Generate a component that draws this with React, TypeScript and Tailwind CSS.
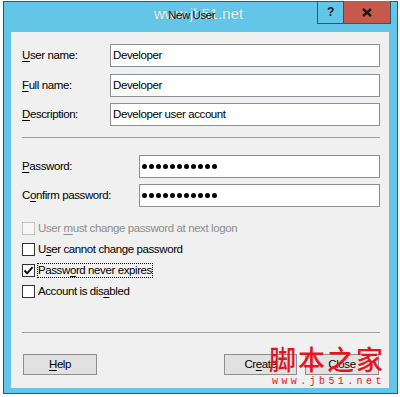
import React from 'react';

type AccProps = { text: string; at: number };

// label text with one underlined access key
function Acc({ text, at }: AccProps) {
  return (
    <span>
      {text.slice(0, at)}
      <span className="underline underline-offset-[2px]">{text[at]}</span>
      {text.slice(at + 1)}
    </span>
  );
}

function TextBox({ value, className }: { value: string; className: string }) {
  return (
    <div className={`h-[23px] border border-[#8c8f94] bg-white pl-[2px] flex items-center ${className}`}>
      {value}
    </div>
  );
}

function PasswordBox({ className }: { className: string }) {
  return (
    <div className={`h-[23px] border border-[#8c8f94] bg-white pl-[2px] flex items-center gap-[2px] ${className}`}>
      {Array.from({ length: 11 }).map((_, i) => (
        <span key={i} className="w-[5px] h-[5px] rounded-full bg-black" />
      ))}
    </div>
  );
}

interface CheckRowProps {
  text: string;
  at: number;
  checked?: boolean;
  disabled?: boolean;
  focused?: boolean;
}

function CheckRow({ text, at, checked, disabled, focused }: CheckRowProps) {
  return (
    <div className="h-[21px] flex items-center">
      <div
        className={`w-[13px] h-[13px] border flex items-center justify-center ${
          disabled ? 'border-[#c4c4c4] bg-[#f6f6f6]' : 'border-[#333333] bg-white'
        }`}
      >
        {checked && (
          <svg width="11" height="11" viewBox="0 0 11 11">
            <path d="M1.5 5.5 L4.2 8.3 L9.6 2.2" fill="none" stroke="#111" strokeWidth="2" />
          </svg>
        )}
      </div>
      {focused ? (
        <span className="ml-[2px] border border-dotted border-black leading-[13px]">
          <Acc text={text} at={at} />
        </span>
      ) : (
        <span className={`ml-[3px] ${disabled ? 'text-[#8d8d8d]' : ''}`}>
          <Acc text={text} at={at} />
        </span>
      )}
    </div>
  );
}

function Button({ text, at, className }: { text: string; at: number; className: string }) {
  return (
    <div className={`h-[21px] border border-[#8e8e8e] bg-[#e1e1e1] flex items-center justify-center ${className}`}>
      <Acc text={text} at={at} />
    </div>
  );
}

export default function App() {
  return (
    <div className="relative w-[400px] h-[397px] bg-white font-['Liberation_Sans',Arial,sans-serif] text-[11.5px] tracking-[-0.4px] text-black">
      {/* Window */}
      <div className="absolute left-[3px] top-[1px] w-[395px] h-[393px] border border-[#2a5a6c] bg-[#63c5e7] flex flex-col">
        {/* Title bar */}
        <div className="relative h-[30px] flex items-start">
          <span className="absolute left-[150px] top-[1px] text-[15px] tracking-[0px] text-[#e4f3f9] [text-shadow:0_0_1px_#7a9aa8]">
            www.jb51.net
          </span>
          <span className="relative ml-[164px] mt-[5px] text-[11.5px] text-[#111]">New User</span>
          <div className="ml-auto mr-[6px] -mt-[1px] h-[23px] flex border-l border-r border-b border-[#2a5a6c]">
            <div className="w-[26px] border-r border-[#2a5a6c] flex items-center justify-center font-bold text-[12px] text-[#1a1a1a]">
              ?
            </div>
            <div className="w-[46px] bg-[#c7584c] flex items-center justify-center">
              <svg width="10" height="9" viewBox="0 0 10 9">
                <path d="M1 1 L9 8 M9 1 L1 8" stroke="#1a1a1a" strokeWidth="2.4" />
              </svg>
            </div>
          </div>
        </div>

        {/* Client area */}
        <div className="ml-[7px] mr-[8px] h-[356px] bg-[#f0f0f0] pl-[11px] pr-[9px] pt-[12px] flex flex-col">
          <div className="flex items-center">
            <span className="w-[88px]"><Acc text="User name:" at={0} /></span>
            <TextBox value="Developer" className="flex-1" />
          </div>
          <div className="flex items-center mt-[7px]">
            <span className="w-[88px]"><Acc text="Full name:" at={0} /></span>
            <TextBox value="Developer" className="flex-1" />
          </div>
          <div className="flex items-center mt-[6px]">
            <span className="w-[88px]"><Acc text="Description:" at={0} /></span>
            <TextBox value="Developer user account" className="flex-1" />
          </div>

          <div className="mt-[11px] h-px bg-[#a0a0a0]" />

          <div className="flex items-center mt-[17px]">
            <span className="w-[117px]"><Acc text="Password:" at={0} /></span>
            <PasswordBox className="flex-1" />
          </div>
          <div className="flex items-center mt-[6px]">
            <span className="w-[117px]"><Acc text="Confirm password:" at={1} /></span>
            <PasswordBox className="flex-1" />
          </div>

          <div className="mt-[11px] flex flex-col">
            <CheckRow text="User must change password at next logon" at={5} disabled />
            <CheckRow text="User cannot change password" at={1} />
            <CheckRow text="Password never expires" at={5} checked focused />
            <CheckRow text="Account is disabled" at={14} />
          </div>

          <div className="mt-[30px] h-px bg-[#a0a0a0]" />

          <div className="mt-[21px] flex items-center">
            <Button text="Help" at={0} className="ml-[1px] w-[74px]" />
            <Button text="Create" at={2} className="ml-auto w-[73px]" />
            <Button text="Close" at={1} className="ml-[8px] mr-[1px] w-[74px]" />
          </div>
        </div>
      </div>

      {/* site watermark */}
      <div className="absolute left-[269px] top-[344px] font-['Noto_Sans_CJK_SC',sans-serif] text-[27px] leading-[30px] tracking-[2px] font-medium text-[#e3161e]">
        脚本之家
      </div>
      <div className="absolute left-[272px] top-[376px] font-['Liberation_Mono',monospace] text-[10px] leading-[12px] tracking-[3.4px] text-[#e3161e]">
        www.jb51.net
      </div>
    </div>
  );
}
